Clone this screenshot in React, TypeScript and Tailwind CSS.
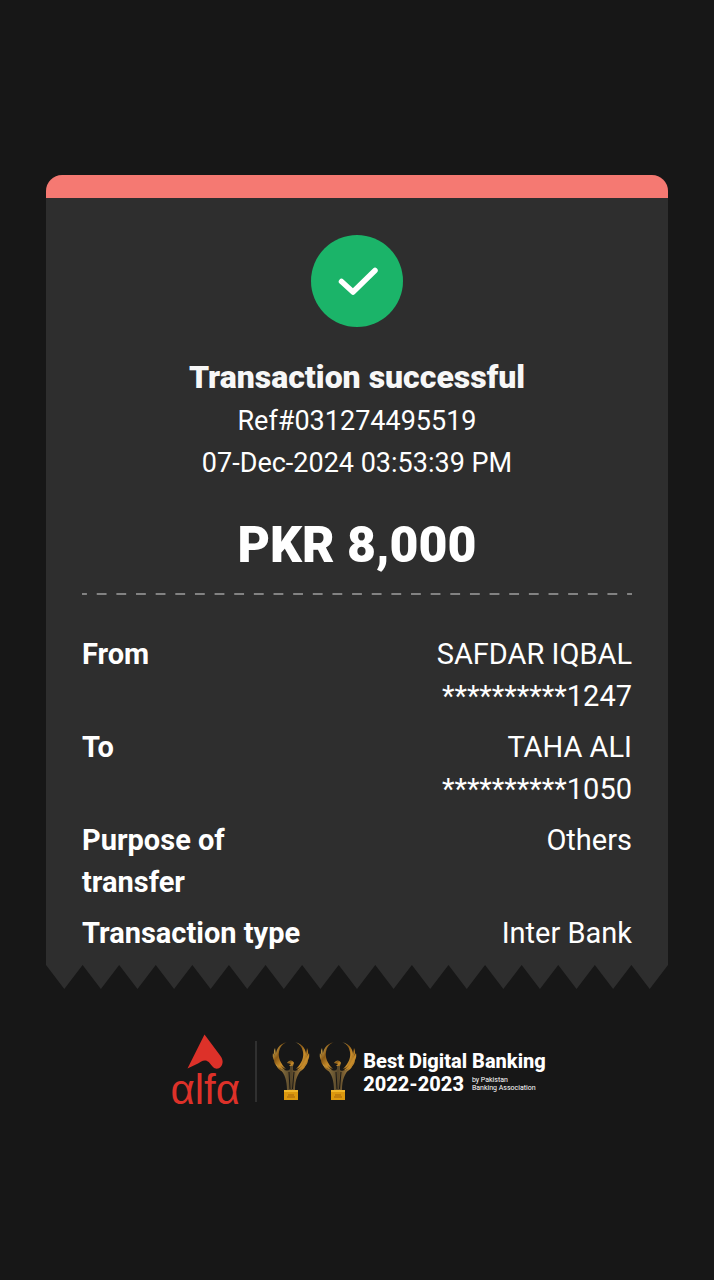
const details = [
  { label: "From", values: ["SAFDAR IQBAL", "**********1247"] },
  { label: "To", values: ["TAHA ALI", "**********1050"] },
  { label: "Purpose of transfer", values: ["Others"] },
  { label: "Transaction type", values: ["Inter Bank"] },
];

function SuccessIcon() {
  return (
    <svg viewBox="0 0 92 92" className="size-[92px]" role="img" aria-label="Success">
      <circle cx="46" cy="46" r="46" fill="#1bb469" />
      <path
        d="M30.5 46.5 L42 57 L64 35.5"
        fill="none"
        stroke="#fff"
        strokeWidth="5.500"
        strokeLinecap="round"
        strokeLinejoin="round"
      />
    </svg>
  );
}

function DashedRule() {
  return (
    <svg viewBox="0 0 552 2" preserveAspectRatio="none" className="h-0.5 w-full" aria-hidden="true">
      <path
        d="M0 1 H552"
        pathLength={560}
        stroke="#828282"
        strokeWidth="2"
        strokeDasharray="10 10"
        strokeDashoffset="5"
      />
    </svg>
  );
}

const teeth = Array.from({ length: 17 }, (_, i) => `L${i * 36 + 18} 24 L${i * 36 + 36} 0`).join(" ");

function TornEdge() {
  return (
    <svg viewBox="0 0 612 24" preserveAspectRatio="none" className="block h-6 w-full" aria-hidden="true">
      <path d={`M0 0 ${teeth} Z`} fill="#2e2e2e" />
    </svg>
  );
}

function AlfaLogo() {
  return (
    <div className="flex w-[70px] flex-col items-center gap-0.5">
      <svg viewBox="0 0 36 36" className="size-9" aria-hidden="true">
        <path
          d="M17.5 0.5 L33.500 22 C36.500 26 36 30 34 32.500 C31.500 35.500 28 35 26 33 C23.500 30.500 22 27 18.500 26.500 C15.500 26.200 13.500 28 11 29.500 L0.500 34.500 Z"
          fill="#dd3129"
        />
      </svg>
      <span className="font-['Liberation_Sans',Arial,sans-serif] text-[42px] leading-9 text-[#dd3129]">
        αlfα
      </span>
    </div>
  );
}

function Trophy() {
  return (
    <svg viewBox="0 0 38 60" className="h-[60px] w-[38px]" aria-hidden="true">
      <defs>
        <linearGradient id="gold" x1="0" y1="0" x2="1" y2="1">
          <stop offset="0" stopColor="#d8b458" />
          <stop offset="0.35" stopColor="#8a5a16" />
          <stop offset="0.65" stopColor="#c98d2a" />
          <stop offset="1" stopColor="#7d5d2a" />
        </linearGradient>
        <linearGradient id="stem" x1="0" y1="0" x2="1" y2="0">
          <stop offset="0" stopColor="#8d7440" />
          <stop offset="0.5" stopColor="#54452a" />
          <stop offset="1" stopColor="#a07a3c" />
        </linearGradient>
      </defs>
      <g fill="url(#gold)">
        <path d="M15 1 C7 3 3 9 4 17 C5 22 9 26 14 28 C8 22 6 16 7 11 C8 6 10 3 15 1 Z" />
        <path d="M23 1 C31 3 35 9 34 17 C33 22 29 26 24 28 C30 22 32 16 31 11 C30 6 28 3 23 1 Z" />
        <path d="M3 7 C1 11 2 14 4 17 L1 12 C0 17 2 20 5 22 L2 19 C2 25 8 28 14 30 C8 25 5 19 4 13 Z" />
        <path d="M35 7 C37 11 36 14 34 17 L37 12 C38 17 36 20 33 22 L36 19 C36 25 30 28 24 30 C30 25 33 19 34 13 Z" />
        <path d="M4 23 C5 29 11 31 16 33 C11 29 7 27 4 23 Z M34 23 C33 29 27 31 22 33 C27 29 31 27 34 23 Z" />
        <path d="M15 22 C17 18.500 21 18.500 22 22 L21 25 L17 25 L19 23 Z" />
      </g>
      <path
        d="M8 28 C13 29 16 31 18 28 L18 25 L21 25 L21 29 C23 31 26 29 30 28 C26 33 23 38 23 49 L15 49 C15 40 13 33 8 28 Z"
        fill="url(#stem)"
      />
      <path d="M17 31 L18 48 M22 31 L20.500 48" stroke="#191714" strokeWidth="1" />
      <path d="M12 49 H26 V59 H12 Z" fill="#dc980e" />
      <path d="M12 49 H26 V51 H12 Z" fill="#f0b62b" />
      <path d="M16 54 H22 M15 56 H23" stroke="#a4630b" strokeWidth="1" />
    </svg>
  );
}

export default function App() {
  return (
    <main className="flex min-h-screen flex-col bg-[#171717] px-[46px] pt-[175px] font-[Roboto,'Liberation_Sans',sans-serif] text-white">
      <section>
        <div className="h-[23px] rounded-t-2xl bg-[#f57972]" />
        <div className="bg-[#2e2e2e] px-9 pt-[37px] pb-[11px]">
          <header className="flex flex-col items-center text-center">
            <SuccessIcon />
            <h1 className="mt-[29px] text-[32px] leading-[42px] font-black text-[#f7f7f7]">
              Transaction successful
            </h1>
            <p className="mt-0.5 text-[27px] leading-[42px]">Ref#031274495519</p>
            <p className="text-[27px] leading-[42px]">07-Dec-2024 03:53:39 PM</p>
            <p className="mt-7 mb-[15px] text-[50px] leading-[66px] font-black">PKR 8,000</p>
          </header>
          <DashedRule />
          <dl className="mt-[38px] flex flex-col gap-[9px] text-[29px] leading-[42px]">
            {details.map((row) => (
              <div key={row.label} className="flex justify-between">
                <dt className="w-[240px] font-bold">{row.label}</dt>
                <dd className="text-right">
                  {row.values.map((value) => (
                    <div key={value}>{value}</div>
                  ))}
                </dd>
              </div>
            ))}
          </dl>
        </div>
        <TornEdge />
      </section>
      <footer className="mt-[45px] flex items-center justify-center pl-0.5">
        <AlfaLogo />
        <div className="mx-[15px] h-[61px] w-0.5 bg-[#303030]" />
        <div className="flex gap-[9px]">
          <Trophy />
          <Trophy />
        </div>
        <div className="ml-1.5 pt-[3px] font-extrabold">
          <p className="text-[20px] leading-[23px]">Best Digital Banking</p>
          <div className="flex items-center gap-2">
            <p className="text-[20px] leading-[23px]">2022-2023</p>
            <p className="text-[7px] leading-2 font-normal">
              by Pakistan
              <br />
              Banking Association
            </p>
          </div>
        </div>
      </footer>
    </main>
  );
}
